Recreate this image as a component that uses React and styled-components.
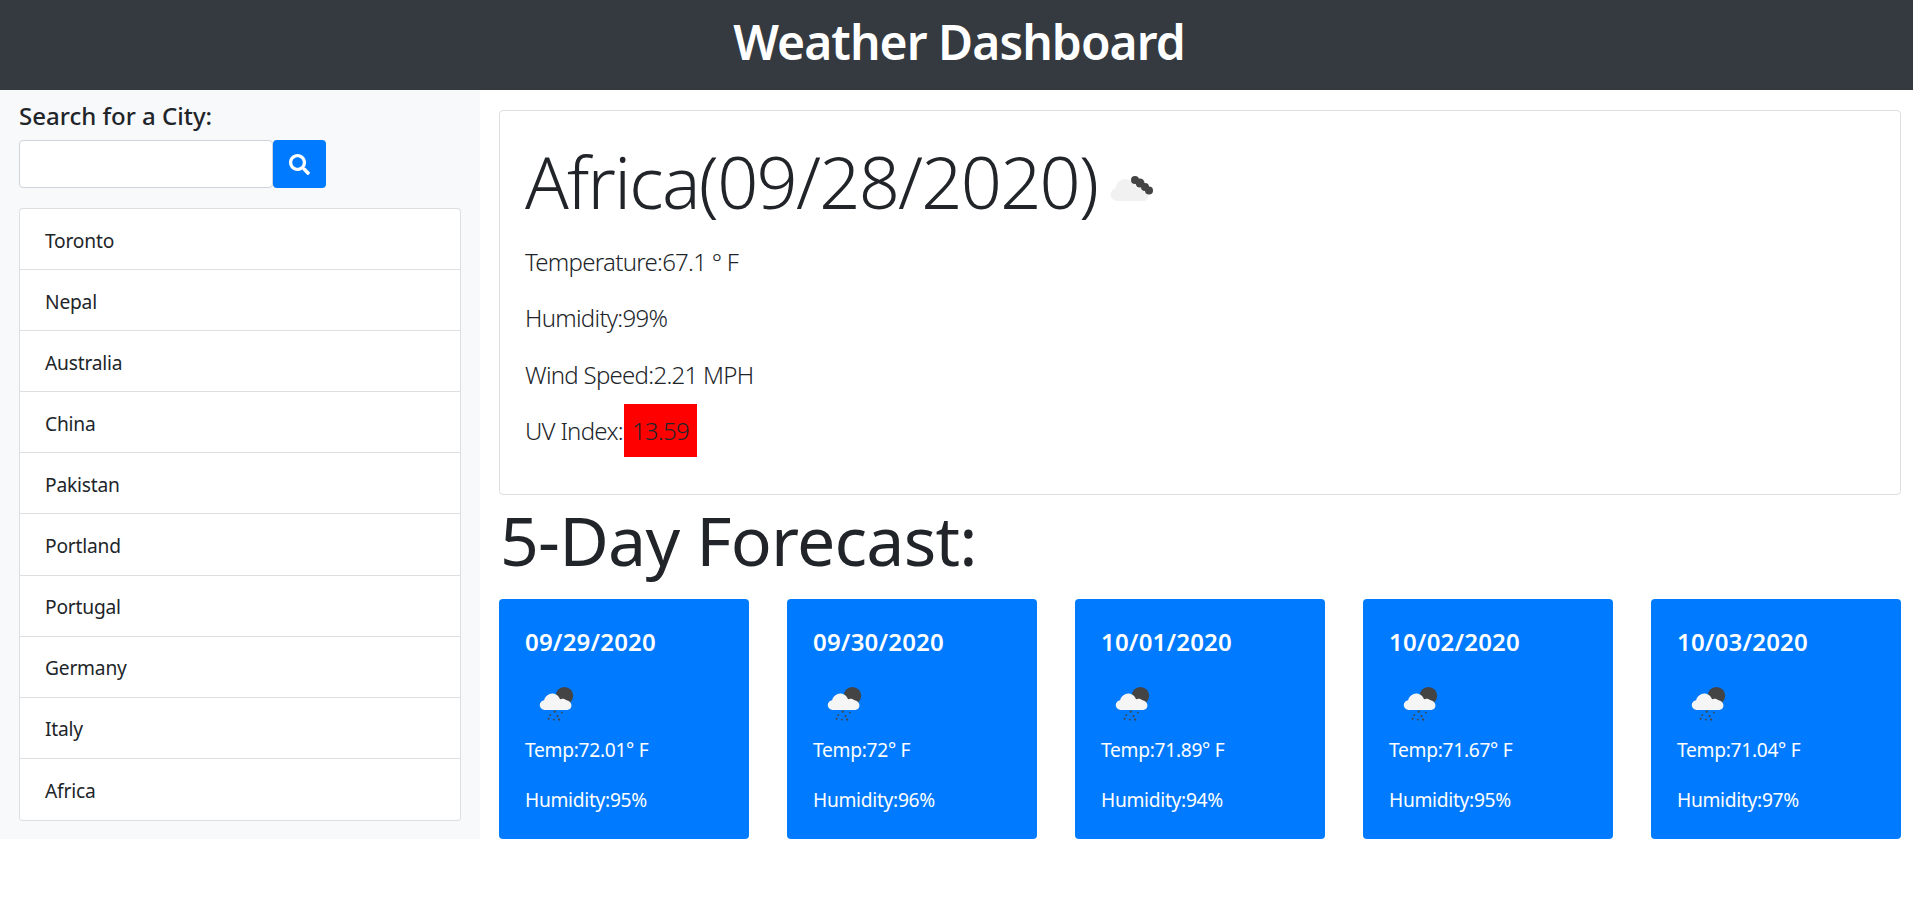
import React from 'react'
import styled, { createGlobalStyle } from 'styled-components'
import { FaSearch } from 'react-icons/fa'

const GlobalStyle = createGlobalStyle`
  * { box-sizing: border-box; }
  body {
    margin: 0;
    background: #fff;
    color: #212529;
    font-family: "Noto Sans", "Open Sans", Arial, sans-serif;
  }
`

const Header = styled.header`
  height: 90px;
  background: #343a40;
  color: #fff;
  display: flex;
  align-items: center;
  justify-content: center;
  padding: 0 0 7px 5px;
`

const PageTitle = styled.h1`
  margin: 0;
  font-size: 48px;
  font-weight: 600;
  letter-spacing: -0.95px;
`

const Layout = styled.div`
  display: flex;
  align-items: flex-start;
`

const Sidebar = styled.aside`
  width: 480px;
  height: 749px;
  flex-shrink: 0;
  background: #f8f9fa;
  padding: 8px 19px 0;
`

const SearchLabel = styled.div`
  font-size: 24px;
  line-height: 36px;
  font-weight: 500;
  margin-bottom: 6px;
`

const SearchRow = styled.form`
  display: flex;
  margin-bottom: 20px;
`

const SearchInput = styled.input`
  width: 254px;
  height: 48px;
  border: 1px solid #ced4da;
  border-radius: 4px;
  background: #fff;
`

const SearchButton = styled.button`
  width: 53px;
  height: 48px;
  padding: 0;
  border: none;
  border-radius: 4px;
  background: #007bff;
  color: #fff;
  font-size: 21px;
  display: flex;
  align-items: center;
  justify-content: center;
`

const CityList = styled.ul`
  list-style: none;
  margin: 0;
  padding: 0;
  width: 442px;
  background: #fff;
  border: 1px solid rgba(0, 0, 0, 0.125);
  border-radius: 4px;
`

const CityItem = styled.li`
  height: 61.1px;
  padding: 2px 25px 0;
  display: flex;
  align-items: center;
  font-size: 19.2px;
  letter-spacing: -0.2px;
  border-bottom: 1px solid rgba(0, 0, 0, 0.125);

  &:last-child {
    border-bottom: none;
  }
`

const Main = styled.main`
  width: 1402px;
  margin-left: 19px;
  padding-top: 20px;
`

const CurrentCard = styled.section`
  height: 385px;
  border: 1px solid rgba(0, 0, 0, 0.125);
  border-radius: 4px;
  padding: 26px 25px;
`

const CityHeading = styled.h2`
  margin: 0 0 8px;
  font-size: 72px;
  line-height: 88px;
  font-weight: 300;
  letter-spacing: -1.7px;
  display: flex;
  align-items: center;
`

const CurrentIcon = styled.svg`
  width: 50px;
  height: 50px;
  margin: 14px 0 0 9px;
`

const Stat = styled.p`
  margin: 0;
  height: 56.5px;
  display: flex;
  align-items: center;
  font-size: 24px;
  font-weight: 300;
  letter-spacing: -0.72px;
`

const UvValue = styled.span`
  width: 73px;
  height: 53px;
  margin-left: 1px;
  background: #ff0000;
  display: flex;
  align-items: center;
  justify-content: center;
`

const ForecastTitle = styled.h2`
  margin: 1px 0 15px 1px;
  font-size: 68px;
  line-height: 88px;
  font-weight: 400;
  letter-spacing: -0.8px;
`

const ForecastGrid = styled.div`
  display: grid;
  grid-template-columns: repeat(5, 250px);
  column-gap: 38px;
`

const ForecastCard = styled.article`
  height: 240px;
  background: #007bff;
  color: #fff;
  border-radius: 4px;
  padding: 27px 26px 0;
`

const ForecastDate = styled.div`
  font-size: 24px;
  line-height: 32px;
  font-weight: 600;
  letter-spacing: 0.2px;
`

const ForecastIcon = styled.svg`
  display: block;
  width: 44px;
  height: 44px;
  margin: 22px 0 0 13px;
`

const ForecastStat = styled.p`
  margin: 0;
  height: 50px;
  display: flex;
  align-items: center;
  font-size: 19.2px;
  letter-spacing: -0.3px;
`

const CloudyIcon = () => (
  <CurrentIcon viewBox="0 0 50 50">
    <path
      d="M11 38a6.5 6.5 0 0 1-1.5-12.8C10 20 14 16 19 16c5 0 8 3 10 7 6 0 13 4 13 10 0 3-2 5-5 5z"
      fill="#f1f1f1"
    />
    <g fill="#444">
      <circle cx="29" cy="17" r="4" />
      <circle cx="34" cy="20" r="4.5" />
      <circle cx="39" cy="24" r="4" />
      <circle cx="43" cy="27.5" r="4" />
    </g>
  </CurrentIcon>
)

const RainIcon = () => (
  <ForecastIcon viewBox="0 0 50 50">
    <circle cx="30" cy="18" r="10" fill="#444" />
    <path
      d="M8 34a5.5 5.5 0 0 1-1-11c1-5 7-9 12-7 3 1 5 3 6 6 2-1 5-1 7 1 2 0 6 2 6 6 0 3-2 5-5 5z"
      fill="#f5f5f5"
    />
    <g fill="#444">
      <circle cx="19" cy="36" r="1.3" />
      <circle cx="27" cy="37" r="1" />
      <circle cx="14" cy="40" r="1" />
      <circle cx="22" cy="41" r="1.2" />
      <circle cx="12" cy="44" r="1.1" />
      <circle cx="18" cy="45" r="1.1" />
      <circle cx="24" cy="45" r="1.3" />
    </g>
  </ForecastIcon>
)

const cities = ['Toronto', 'Nepal', 'Australia', 'China', 'Pakistan', 'Portland', 'Portugal', 'Germany', 'Italy', 'Africa']

const forecast = [
  { date: '09/29/2020', temp: '72.01', humidity: 95 },
  { date: '09/30/2020', temp: '72', humidity: 96 },
  { date: '10/01/2020', temp: '71.89', humidity: 94 },
  { date: '10/02/2020', temp: '71.67', humidity: 95 },
  { date: '10/03/2020', temp: '71.04', humidity: 97 },
]

const App = () => (
  <>
    <GlobalStyle />
    <Header>
      <PageTitle>Weather Dashboard</PageTitle>
    </Header>
    <Layout>
      <Sidebar>
        <SearchLabel>Search for a City:</SearchLabel>
        <SearchRow onSubmit={e => e.preventDefault()}>
          <SearchInput type="text" />
          <SearchButton type="submit" aria-label="Search">
            <FaSearch />
          </SearchButton>
        </SearchRow>
        <CityList>
          {cities.map(city => (
            <CityItem key={city}>{city}</CityItem>
          ))}
        </CityList>
      </Sidebar>
      <Main>
        <CurrentCard>
          <CityHeading>
            Africa(09/28/2020)
            <CloudyIcon />
          </CityHeading>
          <Stat>Temperature:67.1 ° F</Stat>
          <Stat>Humidity:99%</Stat>
          <Stat>Wind Speed:2.21 MPH</Stat>
          <Stat>
            UV Index:<UvValue>13.59</UvValue>
          </Stat>
        </CurrentCard>
        <ForecastTitle>5-Day Forecast:</ForecastTitle>
        <ForecastGrid>
          {forecast.map(day => (
            <ForecastCard key={day.date}>
              <ForecastDate>{day.date}</ForecastDate>
              <RainIcon />
              <ForecastStat>Temp:{day.temp}° F</ForecastStat>
              <ForecastStat>Humidity:{day.humidity}%</ForecastStat>
            </ForecastCard>
          ))}
        </ForecastGrid>
      </Main>
    </Layout>
  </>
)

export default App
